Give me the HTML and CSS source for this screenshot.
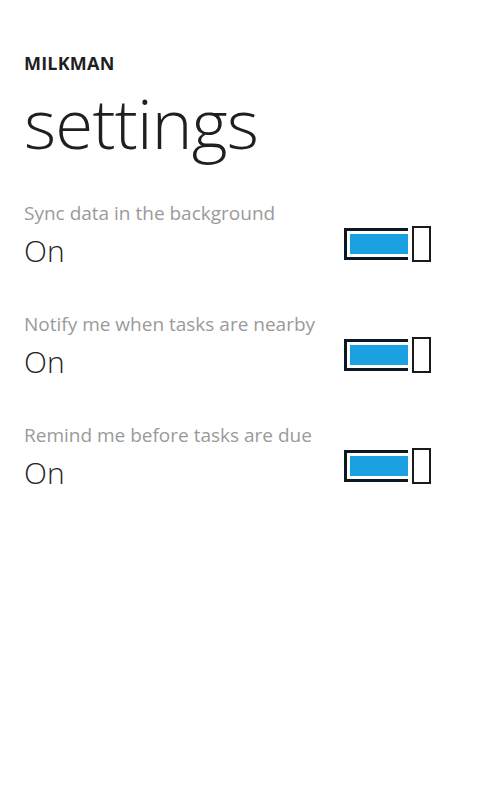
FILE: index.html
```html
<!DOCTYPE html>
<html>
<head>
<meta charset="utf-8">
<link rel="stylesheet" href="styles.css">
</head>
<body>
<div class="page">
  <div class="app-title">MILKMAN</div>
  <div class="page-title">settings</div>
  <div class="settings">
    <div class="setting">
      <div class="texts">
        <div class="label">Sync data in the background</div>
        <div class="value">On</div>
      </div>
      <div class="toggle"><div class="track"><div class="fill"></div></div><div class="thumb"></div></div>
    </div>
    <div class="setting">
      <div class="texts">
        <div class="label">Notify me when tasks are nearby</div>
        <div class="value">On</div>
      </div>
      <div class="toggle"><div class="track"><div class="fill"></div></div><div class="thumb"></div></div>
    </div>
    <div class="setting">
      <div class="texts">
        <div class="label">Remind me before tasks are due</div>
        <div class="value">On</div>
      </div>
      <div class="toggle"><div class="track"><div class="fill"></div></div><div class="thumb"></div></div>
    </div>
  </div>
</div>
</body>
</html>
```
FILE: styles.css
```css
html, body {
  margin: 0;
  padding: 0;
  background: #ffffff;
}
.page {
  width: 480px;
  height: 800px;
  box-sizing: border-box;
  padding: 50px 0 0 24px;
  font-family: "Open Sans", "Noto Sans", sans-serif;
  color: #1f1f1f;
}
.app-title {
  font-size: 18px;
  font-weight: 700;
  line-height: 26px;
  letter-spacing: 0.2px;
}
.page-title {
  font-size: 69px;
  font-weight: 300;
  line-height: 88px;
  margin-top: 2px;
  letter-spacing: -0.8px;
}
.settings {
  margin-top: 34px;
  display: flex;
  flex-direction: column;
  gap: 35px;
}
.setting {
  display: flex;
  align-items: center;
  justify-content: space-between;
  padding-right: 49px;
}
.label {
  font-size: 19px;
  color: #9a9a9a;
  line-height: 26px;
}
.value {
  font-size: 30px;
  font-weight: 300;
  line-height: 50px;
  color: #1f1f1f;
}
.toggle {
  display: flex;
  align-items: center;
  gap: 4px;
  margin-top: 12px;
}
.track {
  width: 64px;
  height: 32px;
  box-sizing: border-box;
  border: 3px solid #0b1722;
  border-right: none;
  padding: 3px 0 3px 3px;
}
.fill {
  width: 100%;
  height: 100%;
  background: #1ba1e2;
}
.thumb {
  width: 19px;
  height: 36px;
  box-sizing: border-box;
  border: 2px solid #1a1a1a;
}
```
